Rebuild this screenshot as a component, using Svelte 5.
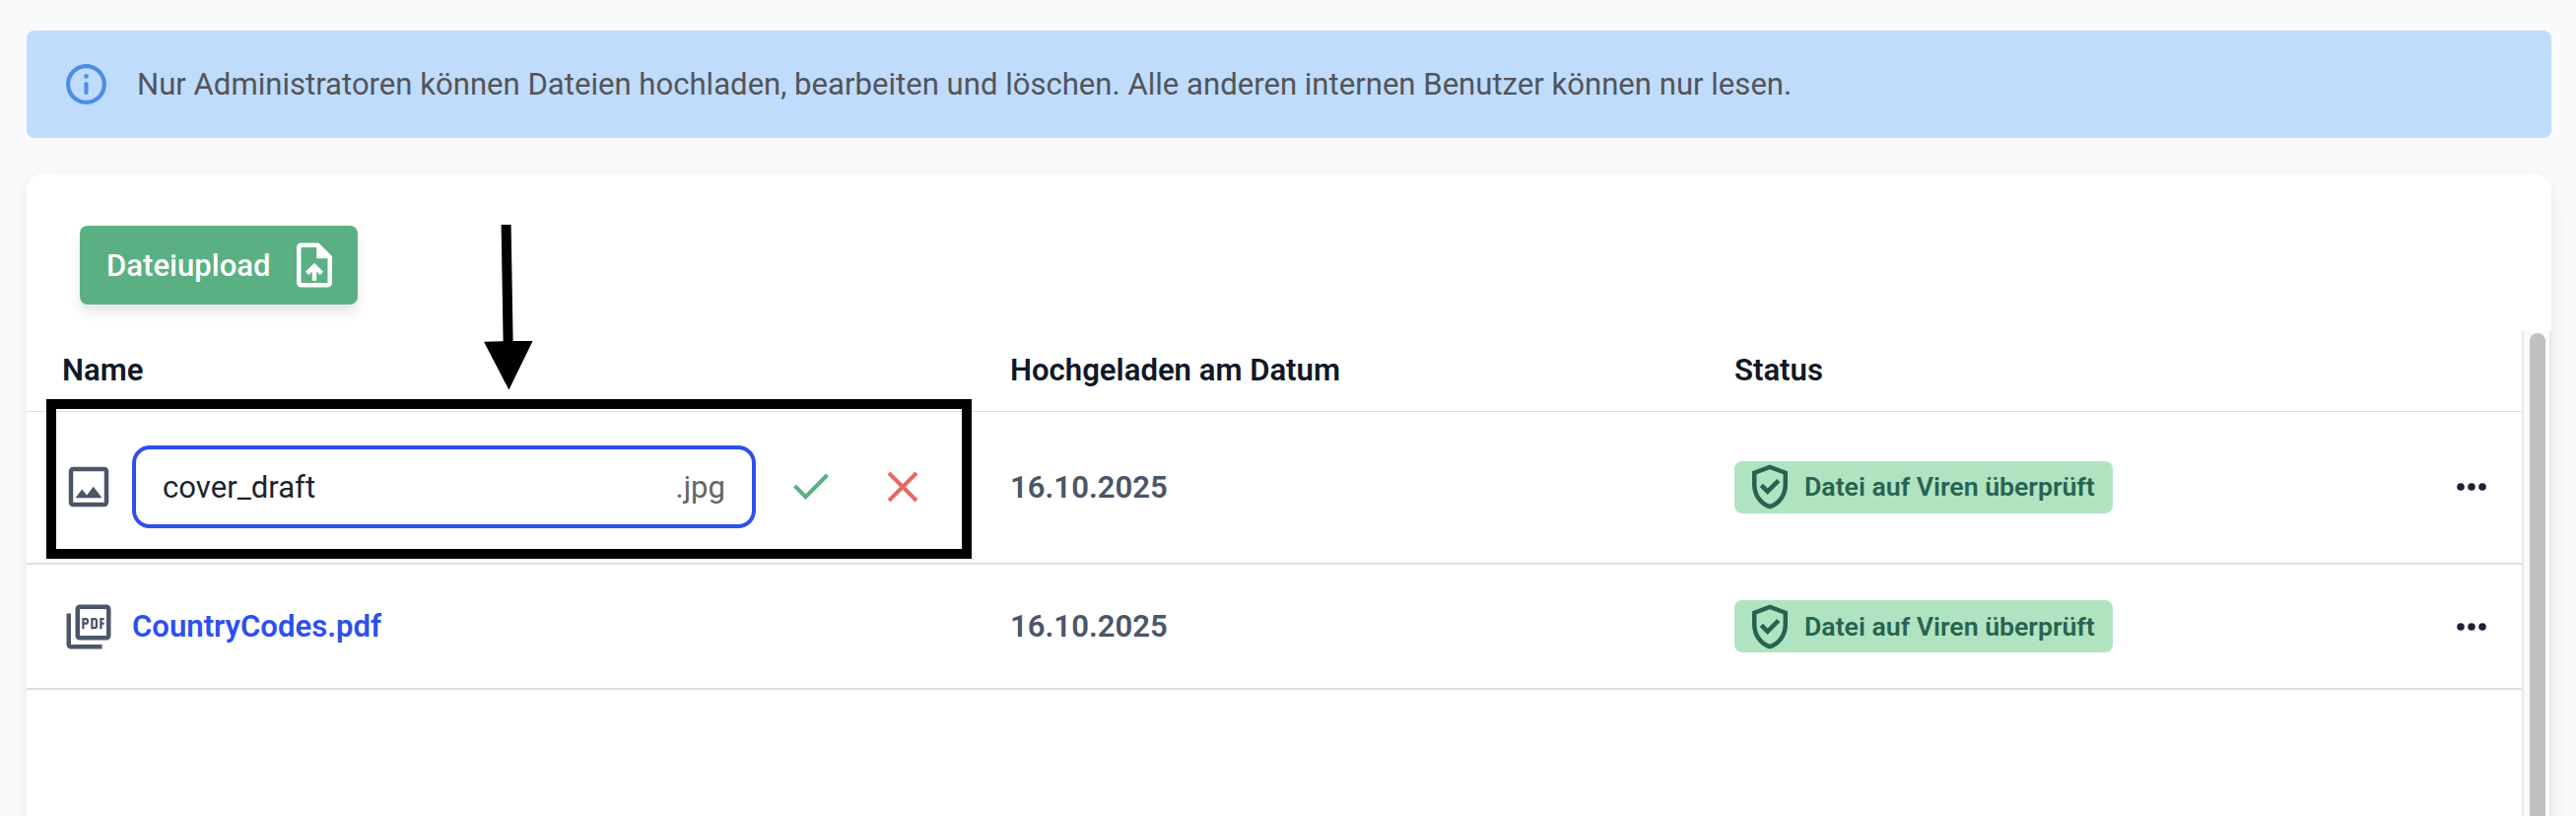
<script>
	let files = [
		{ name: "cover_draft", ext: ".jpg", type: "image", date: "16.10.2025", editing: true },
		{ name: "CountryCodes", ext: ".pdf", type: "pdf", date: "16.10.2025", editing: false }
	];
	const columns = ["Name", "Hochgeladen am Datum", "Status", ""];
</script>

<main>
	<div class="banner">
		<svg class="info" viewBox="0 0 24 24"><path d="M11 7h2v2h-2zm0 4h2v6h-2zm1-9C6.48 2 2 6.48 2 12s4.48 10 10 10 10-4.48 10-10S17.52 2 12 2zm0 18c-4.41 0-8-3.59-8-8s3.59-8 8-8 8 3.59 8 8-3.59 8-8 8z"/></svg>
		<span>Nur Administratoren können Dateien hochladen, bearbeiten und löschen. Alle anderen internen Benutzer können nur lesen.</span>
	</div>

	<section class="card">
		<button class="upload">
			<span>Dateiupload</span>
			<svg viewBox="0 0 24 24"><path fill-rule="evenodd" d="M14 2H6c-1.100 0-2 .9-2 2v16c0 1.100.9 2 2 2h12c1.100 0 2-.9 2-2V8l-6-6zm-1 2H6v16h12V9h-5V4zM8 15.010l1.410 1.410L11 14.840V19h2v-4.160l1.590 1.590L16 15.010 12.010 11 8 15.010z"/></svg>
		</button>

		<div class="scroller">
			<div class="table">
				<div class="row head">
					{#each columns as column}
						<div>{column}</div>
					{/each}
				</div>
				{#each files as file}
					<div class="row" class:editing={file.editing}>
						<div class="name">
							{#if file.type == "image"}
								<svg class="type" viewBox="0 0 24 24"><path d="M19 5v14H5V5h14m0-2H5c-1.100 0-2 .9-2 2v14c0 1.100.9 2 2 2h14c1.100 0 2-.9 2-2V5c0-1.100-.9-2-2-2zm-4.860 8.860l-3 3.870L9 13.140 6 17h12l-3.860-5.140z"/></svg>
							{:else}
								<svg class="type" viewBox="0 0 24 24"><path d="M20 2H8c-1.100 0-2 .9-2 2v12c0 1.100.9 2 2 2h12c1.100 0 2-.9 2-2V4c0-1.100-.9-2-2-2zm0 14H8V4h12v12zM4 6H2v14c0 1.100.9 2 2 2h14v-2H4V6zm12 6V9c0-.55-.45-1-1-1h-2v5h2c.55 0 1-.45 1-1zm-2-3h1v3h-1V9zm4 2h1v-1h-1V9h1V8h-2v5h1zm-8 0h1c.55 0 1-.45 1-1V9c0-.55-.45-1-1-1H9v5h1v-2zm0-2h1v1h-1V9z"/></svg>
							{/if}
							{#if file.editing}
								<label class="field">
									<input bind:value={file.name} aria-label="Name" />
									<span>{file.ext}</span>
								</label>
								<button class="action confirm" aria-label="Speichern">
									<svg viewBox="0 0 36 28"><path d="M1.500 13 12.500 24.200 34.500 2"/></svg>
								</button>
								<button class="action cancel" aria-label="Abbrechen">
									<svg viewBox="0 0 32 32"><path d="M2 2 30 30M30 2 2 30"/></svg>
								</button>
							{:else}
								<span class="link">{file.name}{file.ext}</span>
							{/if}
						</div>
						<div class="date">{file.date}</div>
						<div>
							<div class="badge">
								<svg viewBox="0 -960 960 960"><path d="m438-338 226-226-57-57-169 169-84-84-57 57 141 141Zm42 258q-139-35-229.500-159.500T160-516v-244l320-120 320 120v244q0 152-90.500 276.500T480-80Zm0-84q104-33 172-132t68-220v-189l-240-90-240 90v189q0 121 68 220t172 132Z"/></svg>
								<span>Datei auf Viren überprüft</span>
							</div>
						</div>
						<div class="menu">
							<svg viewBox="0 0 30 8"><circle cx="4" cy="4" r="3.800"/><circle cx="15" cy="4" r="3.800"/><circle cx="26" cy="4" r="3.800"/></svg>
						</div>
					</div>
				{/each}
			</div>
			<div class="scrollbar"><div class="thumb"></div></div>
		</div>
	</section>

	<!-- annotation over the row that is being renamed -->
	<svg class="arrow" viewBox="0 0 50 170">
		<path d="M17.600 0h10l2 118h20l-24.200 49.500L0 118.800l19.600-.5z"/>
	</svg>
	<div class="highlight"></div>
</main>

<style>
	:global(body) {
		margin: 0;
		overflow: hidden;
		background: #f9fafc;
	}

	main {
		position: relative;
		box-sizing: border-box;
		height: 828px;
		padding: 31px 25px 0 27px;
		overflow: hidden;
		font-family: Roboto, sans-serif;
		font-size: 31.1px;
		color: #111827;
	}

	svg {
		display: block;
		fill: currentColor;
		flex: none;
	}

	button {
		font: inherit;
		border: 0;
		padding: 0;
		background: none;
	}

	.banner {
		display: flex;
		align-items: center;
		gap: 27px;
		height: 109px;
		box-sizing: border-box;
		padding-left: 36px;
		border-radius: 8px;
		background: #bfdcfd;
		color: #535458;
	}

	.info {
		width: 49px;
		height: 49px;
		color: #4a8ee6;
	}

	.card {
		display: flex;
		flex-direction: column;
		align-items: flex-start;
		height: 700px;
		margin-top: 36px;
		border-radius: 18px 18px 0 0;
		background: #fff;
		box-shadow: 0 8px 20px rgba(0, 0, 0, 0.08);
	}

	.upload {
		display: flex;
		flex: none;
		align-items: center;
		justify-content: space-between;
		box-sizing: border-box;
		width: 282px;
		height: 80px;
		margin: 53px 0 27px 54px;
		padding: 0 17px 0 27px;
		border-radius: 8px;
		background: #5ab082;
		color: #fff;
		font-weight: 500;
		box-shadow: 0 8px 12px rgba(0, 0, 0, 0.1);
	}

	.upload svg {
		width: 54px;
		height: 54px;
	}

	.scroller {
		display: flex;
		align-self: stretch;
		flex: 1;
	}

	.table {
		flex: 1;
	}

	.row {
		display: grid;
		grid-template-columns: 961px 735px 1fr 80px;
		align-items: center;
		height: 125px;
		padding-left: 37px;
		border-bottom: 2px solid #dfdfdf;
	}

	.head {
		box-sizing: border-box;
		height: 82px;
		padding: 0 0 2px 36px;
		grid-template-columns: 962px 735px 1fr 80px;
		border-bottom-width: 1px;
		font-weight: 600;
		line-height: 38px;
	}

	.editing {
		height: 152px;
		padding-bottom: 1px;
	}

	.name {
		display: flex;
		align-items: center;
	}

	.type {
		width: 54px;
		height: 54px;
		margin: 0 17px 0 -1px;
		color: #4b5669;
	}

	.field {
		display: flex;
		align-items: center;
		box-sizing: border-box;
		width: 633px;
		height: 84px;
		padding: 0 27px;
		border: 4px solid #2d50ed;
		border-radius: 18px;
		color: #666;
	}

	.field input {
		flex: 1;
		min-width: 0;
		padding: 0;
		border: 0;
		outline: none;
		background: none;
		font: inherit;
		color: #1b2430;
	}

	.action svg {
		fill: none;
		stroke: currentColor;
		stroke-width: 4;
	}

	.confirm {
		margin-left: 38px;
		color: #5ab082;
	}

	.confirm svg {
		width: 36px;
		height: 28px;
	}

	.cancel {
		margin-left: 59px;
		color: #e7685c;
	}

	.cancel svg {
		width: 32px;
		height: 32px;
	}

	.link {
		font-weight: 600;
		color: #2d50ed;
	}

	.date {
		font-weight: 600;
		color: #4b5669;
	}

	.badge {
		display: flex;
		align-items: center;
		gap: 8px;
		box-sizing: border-box;
		width: 384px;
		height: 53px;
		padding-left: 9px;
		border-radius: 8px;
		background: #b0e4c1;
		color: #286351;
		font-size: 26.65px;
		font-weight: 600;
		white-space: nowrap;
	}

	.badge svg {
		width: 54px;
		height: 54px;
	}

	.menu svg {
		width: 30px;
		height: 8px;
		margin-left: 14px;
		color: #1b2430;
	}

	.scrollbar {
		box-sizing: border-box;
		width: 30px;
		padding: 2px 0 0 6px;
		border: 2px solid #e8e8e8;
		border-width: 0 2px;
		background: #fafafa;
	}

	.thumb {
		width: 16px;
		height: 600px;
		border-radius: 8px;
		background: #c1c1c1;
	}

	.arrow {
		position: absolute;
		left: 491px;
		top: 228px;
		width: 50px;
		height: 170px;
		color: #000;
	}

	.highlight {
		position: absolute;
		left: 47px;
		top: 405px;
		box-sizing: border-box;
		width: 939px;
		height: 162px;
		border: 10px solid #000;
		pointer-events: none;
	}
</style>
